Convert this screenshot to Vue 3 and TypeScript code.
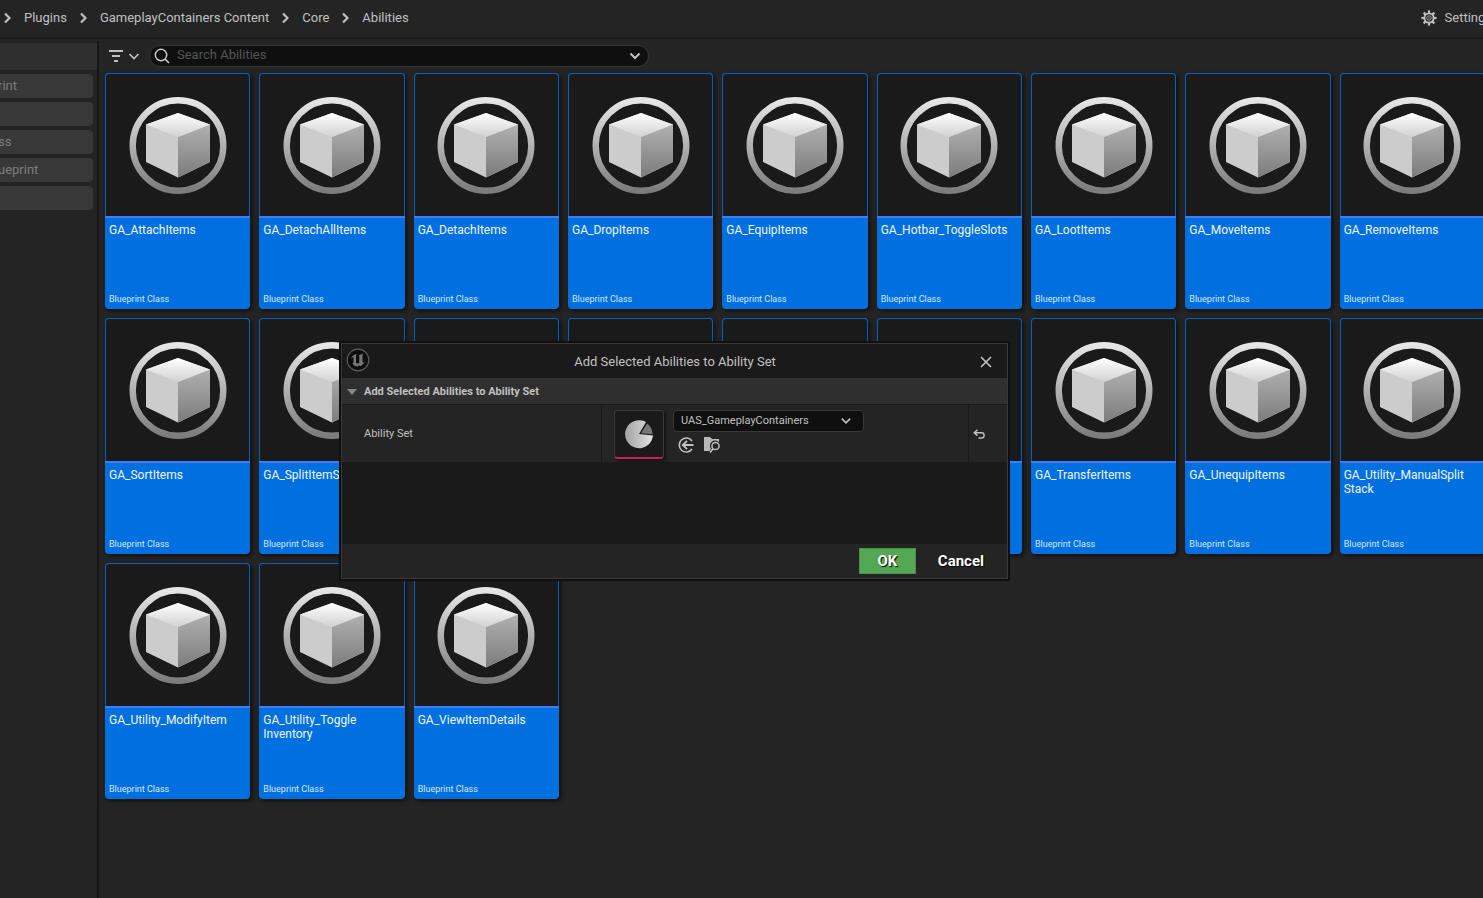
<script setup lang="ts">
import { ref } from 'vue'

interface Asset {
  id: number
  lines: string[]
}

const crumbs: string[] = ['Plugins', 'GameplayContainers Content', 'Core', 'Abilities']
const filters: string[] = ['rint', '', 'ss', 'ueprint', '']
const names: string[][] = [
  ['GA_AttachItems'], ['GA_DetachAllItems'], ['GA_DetachItems'], ['GA_DropItems'], ['GA_EquipItems'],
  ['GA_Hotbar_ToggleSlots'], ['GA_LootItems'], ['GA_MoveItems'], ['GA_RemoveItems'],
  ['GA_SortItems'], ['GA_SplitItemS'], [], [], [],
  [], ['GA_TransferItems'], ['GA_UnequipItems'], ['GA_Utility_ManualSplit', 'Stack'],
  ['GA_Utility_ModifyItem'], ['GA_Utility_Toggle', 'Inventory'], ['GA_ViewItemDetails'],
]
const assets: Asset[] = names.map((lines, id) => ({ id, lines }))

const search = ref('')
const abilitySet = ref('UAS_GameplayContainers')
const teeth: number[] = [0, 45, 90, 135, 180, 225, 270, 315]
</script>

<template>
  <div class="browser">
    <svg class="defs" width="0" height="0" aria-hidden="true">
      <defs>
        <linearGradient id="ring" x1="0" y1="0" x2="0" y2="1">
          <stop offset="0" stop-color="#e6e6e6" />
          <stop offset="1" stop-color="#7c7c7c" />
        </linearGradient>
        <linearGradient id="top" x1="0" y1="0" x2="0" y2="1">
          <stop offset="0" stop-color="#ffffff" />
          <stop offset="1" stop-color="#d2d2d2" />
        </linearGradient>
        <linearGradient id="side" x1="0" y1="0" x2="0" y2="1">
          <stop offset="0" stop-color="#b0b0b0" />
          <stop offset="1" stop-color="#7c7c7c" />
        </linearGradient>
        <linearGradient id="pie" x1="0" y1="0" x2="1" y2="0">
          <stop offset="0" stop-color="#a2a2a2" />
          <stop offset="1" stop-color="#e4e4e4" />
        </linearGradient>
        <symbol id="cube" viewBox="0 0 98 98">
          <circle cx="49" cy="49.5" r="45.3" fill="none" stroke="url(#ring)" stroke-width="6.4" />
          <path d="M17 28.500L49 17L81 28.500V66L49 81.500L17 66Z" fill="#cccccc" />
          <path d="M49 41L81 28.500V66L49 81.500Z" fill="url(#side)" />
          <path d="M17 28.500L49 17L81 28.500L49 41Z" fill="url(#top)" />
        </symbol>
      </defs>
    </svg>

    <header class="bar">
      <nav class="crumbs" aria-label="Path">
        <template v-for="crumb in crumbs" :key="crumb">
          <svg viewBox="0 0 7 12" width="7" height="12" aria-hidden="true">
            <path d="M1 1.500L5.500 6L1 10.500" fill="none" stroke="#c0c0c0" stroke-width="2.200" />
          </svg>
          <a href="#">{{ crumb }}</a>
        </template>
      </nav>
      <button class="settings" type="button">
        <svg viewBox="0 0 16 16" width="16" height="16" aria-hidden="true">
          <circle cx="8" cy="8" r="4.600" fill="none" stroke="#c0c0c0" stroke-width="1.800" />
          <circle cx="8" cy="8" r="2.300" fill="#4c4c4c" stroke="#8c8c8c" stroke-width="1" />
          <path v-for="a in teeth" :key="a" d="M8 .4V3.200" stroke="#c0c0c0" stroke-width="2.200" :transform="`rotate(${a} 8 8)`" />
        </svg>
        <span>Settings</span>
      </button>
    </header>

    <div class="body">
      <aside class="filters">
        <div class="filters-head"></div>
        <button v-for="(f, i) in filters" :key="i" class="filter" type="button" :aria-label="f || 'Filter'">{{ f }}</button>
      </aside>

      <main class="content">
        <div class="tools">
          <button class="filter-menu" type="button" aria-label="Filters">
            <svg viewBox="0 0 32 14" width="32" height="14" aria-hidden="true">
              <path d="M1 2H15M4 7H12M6 12H10" stroke="#c0c0c0" stroke-width="1.800" fill="none" />
              <path d="M21.500 5L26 9.500L30.500 5" stroke="#c0c0c0" stroke-width="1.700" fill="none" />
            </svg>
          </button>
          <div class="search">
            <svg viewBox="0 0 16 16" width="16" height="16" aria-hidden="true">
              <circle cx="7" cy="7" r="5.700" fill="none" stroke="#c8c8c8" stroke-width="1.500" />
              <path d="M11 11L15 15" stroke="#c8c8c8" stroke-width="1.700" />
            </svg>
            <input v-model="search" type="text" placeholder="Search Abilities" aria-label="Search Abilities" />
            <svg viewBox="0 0 12 8" width="12" height="8" aria-hidden="true">
              <path d="M1.500 1.500L6 6L10.500 1.500" fill="none" stroke="#c0c0c0" stroke-width="2" />
            </svg>
          </div>
        </div>

        <div class="grid">
          <article v-for="asset in assets" :key="asset.id" class="card">
            <div class="thumb">
              <svg width="98" height="98" aria-hidden="true"><use href="#cube" /></svg>
            </div>
            <div class="info">
              <div class="name">
                <div v-for="line in asset.lines" :key="line">{{ line }}</div>
              </div>
              <div v-if="asset.lines.length" class="kind">Blueprint Class</div>
            </div>
          </article>
        </div>
      </main>
    </div>

    <section class="dialog" role="dialog" aria-labelledby="dialog-title">
      <div class="title">
        <svg class="logo" viewBox="0 0 24 24" width="24" height="24" aria-hidden="true">
          <circle cx="12" cy="12" r="10.800" fill="#0c0c0c" stroke="#5c5c5c" stroke-width="1.200" />
          <path d="M5 10.500C6 8 8 6.300 11 5.700C10.200 6.500 10 7.200 10 8V14.500C10.500 15.700 12 15.900 13.300 14.900V8.300C13.300 7.700 13 7.400 12.400 7.300C14 7 15.800 6.300 17.500 5.200C16.700 6.200 16.500 6.800 16.500 7.800V14C16.500 14.800 17.200 15 18.600 14C17.800 16 16 17.500 14 18.300L13.200 17.200L11.700 18.600C9 18.400 7.200 17.200 6.300 15.300C7.200 15.300 7.500 15 7.500 14.200V9.700C7.500 8.800 6.500 9 5 10.500Z" fill="#747874" />
        </svg>
        <h2 id="dialog-title">Add Selected Abilities to Ability Set</h2>
        <button class="close" type="button" aria-label="Close">
          <svg viewBox="0 0 12 12" width="12" height="12" aria-hidden="true">
            <path d="M1 1L11 11M11 1L1 11" stroke="#c8c8c8" stroke-width="1.500" />
          </svg>
        </button>
      </div>
      <button class="group" type="button">
        <svg viewBox="0 0 10 6" width="10" height="6" aria-hidden="true"><path d="M0 0H10L5 6Z" fill="#868686" /></svg>
        <span>Add Selected Abilities to Ability Set</span>
      </button>
      <div class="row">
        <label class="label" for="ability-set">Ability Set</label>
        <div class="value">
          <div class="asset-thumb">
            <svg viewBox="0 0 30 30" width="30" height="30" aria-hidden="true">
              <path d="M15 15L22 3A14 14 0 1 0 29 16.500Z" fill="url(#pie)" />
              <path d="M17 14.300L23 4.500A13.500 13.500 0 0 1 28.500 15.200Z" fill="#777777" />
            </svg>
          </div>
          <div class="picker">
            <div class="select">
              <select id="ability-set" v-model="abilitySet">
                <option>UAS_GameplayContainers</option>
              </select>
              <svg viewBox="0 0 10 6" width="10" height="6" aria-hidden="true">
                <path d="M.8.600L5 4.800L9.200.600" fill="none" stroke="#c0c0c0" stroke-width="1.600" />
              </svg>
            </div>
            <div class="actions">
              <button type="button" aria-label="Use selected asset">
                <svg viewBox="0 0 16 16" width="16" height="16" aria-hidden="true">
                  <path d="M14 4A7 7 0 1 0 14 12" fill="none" stroke="#c0c0c0" stroke-width="1.600" />
                  <path d="M15.500 8H5M9 3.800L4.800 8L9 12.200" fill="none" stroke="#c0c0c0" stroke-width="1.900" />
                </svg>
              </button>
              <button type="button" aria-label="Browse to asset">
                <svg viewBox="0 0 16 16" width="16" height="16" aria-hidden="true">
                  <path d="M0 0H6L8 2H15V5.500A5 5 0 0 0 7 12L5.500 14H0Z" fill="#b8b8b8" />
                  <circle cx="11.500" cy="9" r="3.600" fill="#242424" stroke="#c0c0c0" stroke-width="1.500" />
                  <path d="M9 11.800L6 15.600" stroke="#c0c0c0" stroke-width="1.600" />
                </svg>
              </button>
            </div>
          </div>
        </div>
        <button class="reset" type="button" aria-label="Reset to default">
          <svg viewBox="0 0 12 10" width="12" height="10" aria-hidden="true">
            <path d="M4.500.800L1.200 3.700L4.500 6.600M1.500 3.700H8.500A2.600 2.600 0 0 1 8.500 9H5.500" fill="none" stroke="#c0c0c0" stroke-width="1.400" />
          </svg>
        </button>
      </div>
      <div class="blank"></div>
      <div class="footer">
        <button class="ok" type="button">OK</button>
        <button class="cancel" type="button">Cancel</button>
      </div>
    </section>
  </div>
</template>

<style>
html,
body {
  margin: 0;
  background: #242424;
  overflow: hidden;
}
</style>

<style scoped>
* {
  box-sizing: border-box;
}
.browser {
  position: relative;
  display: flex;
  flex-direction: column;
  height: 100vh;
  overflow: hidden;
  background: #242424;
  color: #c0c0c0;
  font-family: Roboto, sans-serif;
  font-size: 13px;
  line-height: 16px;
}
.defs {
  position: absolute;
}
button {
  padding: 0;
  border: 0;
  background: none;
  color: inherit;
  font: inherit;
}
svg {
  display: block;
  flex: none;
}
.bar {
  display: flex;
  align-items: center;
  justify-content: space-between;
  height: 39px;
  flex: none;
  padding-bottom: 2px;
  border-bottom: 2px solid #1a1a1a;
}
.crumbs {
  display: flex;
  align-items: center;
  gap: 13px;
  padding-left: 4px;
}
.crumbs a {
  color: inherit;
  text-decoration: none;
}
.settings {
  display: flex;
  align-items: center;
  gap: 8px;
  margin-right: -9px;
}
.body {
  display: flex;
  flex: 1;
  min-height: 0;
  padding-top: 2px;
}
.filters {
  display: flex;
  flex-direction: column;
  gap: 4px;
  flex: none;
  width: 99px;
  padding-top: 2px;
  border-right: 2px solid #161616;
}
.filters-head {
  height: 27px;
  background: #2f2f2f;
}
.filter {
  height: 24px;
  margin-right: 4px;
  border-radius: 0 4px 4px 0;
  background: #383838;
  color: #7c7c7c;
  text-align: left;
  text-indent: -2px;
}
.content {
  flex: 1;
  min-width: 0;
  padding: 4px 0 0 6px;
}
.tools {
  display: flex;
  align-items: center;
  gap: 9px;
  padding-left: 3px;
}
.search {
  display: flex;
  align-items: center;
  gap: 7px;
  width: 500px;
  height: 22px;
  padding: 0 7px 0 4px;
  border: 1px solid #363636;
  border-radius: 11px;
  background: #0f0f0f;
}
.search input {
  flex: 1;
  min-width: 0;
  padding: 0 0 2px;
  border: 0;
  outline: 0;
  background: none;
  color: #c0c0c0;
  font: inherit;
}
.search input::placeholder {
  color: #555555;
}
.grid {
  display: grid;
  grid-template-columns: repeat(9, minmax(0, 1fr));
  gap: 9px;
  margin: 6px -2px 0 0;
}
.card {
  display: flex;
  flex-direction: column;
  height: 236px;
  overflow: hidden;
  border-radius: 4px;
  background: #0070e0;
  box-shadow: 2px 2px 4px rgba(0, 0, 0, 0.6);
}
.thumb {
  display: flex;
  align-items: center;
  justify-content: center;
  height: 143px;
  border: 1px solid #0062c4;
  border-bottom: 0;
  border-radius: 4px 4px 0 0;
  background: #1a1a1a;
}
.info {
  display: flex;
  flex-direction: column;
  justify-content: space-between;
  flex: 1;
  padding: 5px 4px;
  border-top: 2px solid #407cff;
  color: #f0f6ff;
}
.name {
  font-size: 12px;
  line-height: 14px;
  white-space: nowrap;
}
.kind {
  color: #d6e8fb;
  font-size: 9px;
  line-height: 10px;
}
.dialog {
  position: absolute;
  left: 339px;
  top: 341px;
  width: 671px;
  border: 2px solid #0f0f0f;
  border-radius: 2px;
  background: #1a1a1a;
  box-shadow: inset 0 0 0 1px #383838;
  padding: 1px;
}
.title {
  display: flex;
  align-items: center;
  height: 34px;
  padding: 1px 15px 0 4px;
}
.title h2 {
  flex: 1;
  margin: 0;
  padding-top: 1px;
  font-size: 13px;
  font-weight: 400;
  text-align: center;
}
.logo {
  align-self: flex-start;
  margin-top: 3px;
}
.group {
  display: flex;
  align-items: center;
  gap: 7px;
  width: 100%;
  height: 27px;
  padding: 2px 0 0 5px;
  border-bottom: 1px solid #1a1a1a;
  background: #2f2f2f;
  font-size: 11px;
  font-weight: 700;
}
.row {
  display: flex;
  height: 57px;
  background: #242424;
  font-size: 11px;
}
.label {
  display: flex;
  align-items: center;
  width: 260px;
  padding-left: 22px;
  border-right: 1px solid #1a1a1a;
}
.value {
  display: flex;
  flex: 1;
  gap: 9px;
  padding: 5px 0 0 12px;
}
.asset-thumb {
  display: flex;
  align-items: center;
  justify-content: center;
  width: 50px;
  height: 49px;
  border: 1px solid #383838;
  border-bottom: 2px solid #d01c5c;
  border-radius: 4px;
  background: #1a1a1a;
  box-shadow: 2px 2px 3px rgba(0, 0, 0, 0.5);
}
.select {
  display: flex;
  align-items: center;
  width: 191px;
  height: 22px;
  padding-right: 12px;
  border: 1px solid #383838;
  border-radius: 4px;
  background: #0f0f0f;
}
.select select {
  flex: 1;
  min-width: 0;
  padding: 0 0 0 7px;
  border: 0;
  outline: 0;
  appearance: none;
  background: none;
  color: #c0c0c0;
  font: inherit;
}
.actions {
  display: flex;
  gap: 10px;
  padding: 5px 0 0 5px;
}
.reset {
  display: flex;
  align-items: center;
  width: 39px;
  padding-left: 4px;
  border-left: 1px solid #1a1a1a;
}
.blank {
  height: 82px;
}
.footer {
  display: flex;
  align-items: center;
  justify-content: flex-end;
  gap: 22px;
  height: 34px;
  padding-right: 23px;
  background: #242424;
  color: #ffffff;
  font-size: 15px;
  font-weight: 700;
  text-shadow: 1px 1px 1px #000000;
}
.ok {
  width: 57px;
  height: 26px;
  border: 1px solid #489048;
  background: #54a854;
  text-shadow: inherit;
}
.cancel {
  text-shadow: inherit;
}
</style>
